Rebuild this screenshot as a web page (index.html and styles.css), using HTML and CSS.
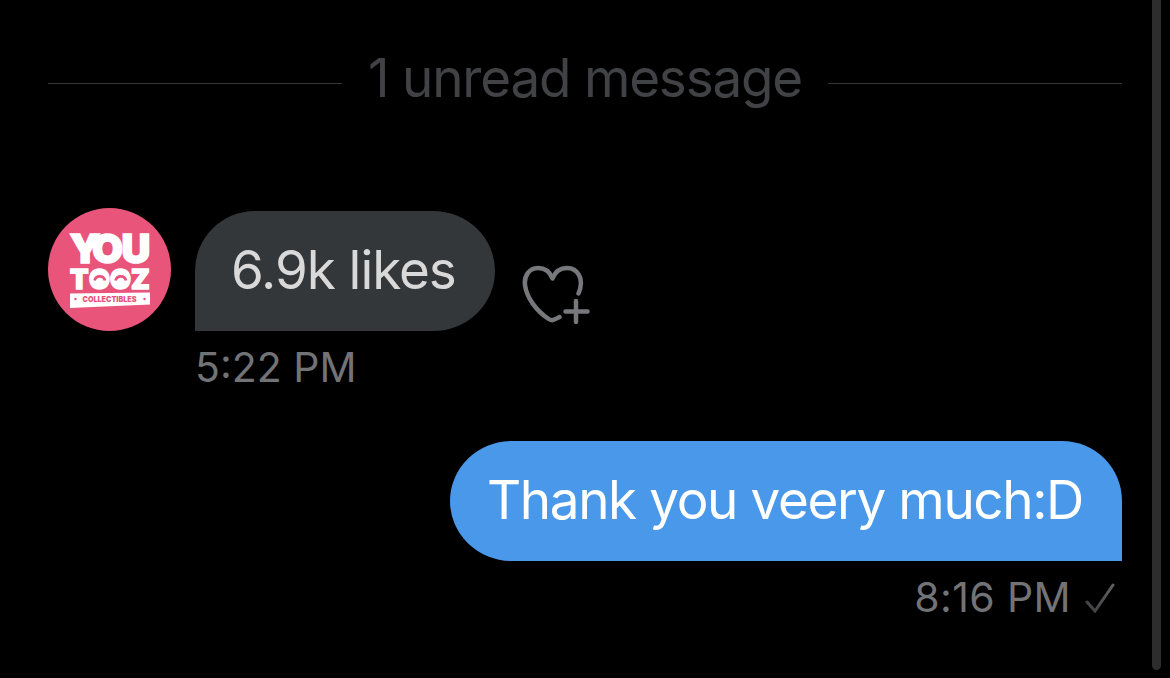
FILE: index.html
```html
<!DOCTYPE html>
<html lang="en">
  <head>
    <meta charset="UTF-8" />
    <meta name="viewport" content="width=device-width, initial-scale=1.0" />
    <title>Messages</title>
    <link rel="stylesheet" href="styles.css">
  </head>
  <body>
    <main class="chat">
      <div class="divider">
        <span class="divider-text">1 unread message</span>
      </div>

      <div class="message received">
        <svg class="avatar" viewBox="0 0 123 123">
          <circle cx="61.5" cy="61.5" r="61.5" fill="#e9547b" />
          <g class="logo">
            <text class="logo-you" x="21.500 44 73.500" y="54.500">YOU</text>
            <text class="logo-tooz" x="22 41 62 83" y="81">TOOZ</text>
          </g>
          <g fill="#fff">
            <ellipse cx="52" cy="71" rx="9" ry="10" />
            <ellipse cx="73" cy="71" rx="9" ry="10" />
            <path d="M22 85.500L102 84.500V96.500L22 100z" />
          </g>
          <g fill="none" stroke="#e9547b" stroke-width="2.800">
            <path d="M46.500 72.500c1.500-5.500 9-5.500 10.500 0M67.500 72.500c1.500-5.500 9-5.500 10.500 0" />
          </g>
          <g fill="#e9547b">
            <circle cx="27.500" cy="91" r="1.200" />
            <circle cx="96.500" cy="91" r="1.200" />
            <text class="logo-small" x="34.500" y="94" textLength="54" lengthAdjust="spacingAndGlyphs">COLLECTIBLES</text>
          </g>
        </svg>
        <div class="bubble">6.9k likes</div>
        <svg class="react" viewBox="0 0 70 64">
          <path d="M56.500 29.500C63 14 55 4 45 4C38 4 33 8 30.500 14.500C28 8 23 4 16 4C7 4 2 12 3 21C4.500 34 15 47 26 54.500C30 57.500 32 56 37.500 53" />
          <path d="M54 37v21M43.500 47.500h22" />
        </svg>
      </div>
      <div class="time">5:22 PM</div>

      <div class="message sent">
        <div class="bubble">Thank you veery much:D</div>
      </div>
      <div class="time sent">
        <span>8:16 PM</span>
        <svg class="check" viewBox="0 0 30 30">
          <defs>
            <linearGradient id="fade" x1="0" y1="1" x2="1" y2="0">
              <stop offset="0" stop-color="#404044" />
              <stop offset="1" stop-color="#606064" />
            </linearGradient>
          </defs>
          <path d="M2 19L10 28L28 2" stroke="url(#fade)" />
        </svg>
      </div>
    </main>
    <div class="scrollbar"></div>
  </body>
</html>
```

FILE: styles.css
```css
body {
  margin: 0;
  background: #000;
  font-family: Inter, "Liberation Sans", sans-serif;
  height: 678px;
  overflow: hidden;
}
.chat {
  padding: 46px 48px 0;
}
.divider {
  display: flex;
  align-items: center;
  gap: 26px;
  height: 74px;
  margin-bottom: 88px;
}
.divider::before,
.divider::after {
  content: "";
  flex: 1;
  height: 1px;
  background: #343536;
}
.divider-text {
  padding-bottom: 10px;
  color: #414245;
  font-size: 53px;
  line-height: 64px;
  letter-spacing: -1.2px;
  white-space: nowrap;
}
.message {
  display: flex;
  align-items: flex-end;
}
.avatar {
  width: 123px;
  height: 123px;
  margin-right: 24px;
}
.bubble {
  box-sizing: border-box;
  width: 300px;
  height: 120px;
  padding-left: 36px;
  border-radius: 60px 62px 62px 0 / 60px 60px 60px 0;
  background: #343739;
  color: #d9d9d9;
  font-size: 53px;
  line-height: 118px;
  letter-spacing: -1.05px;
  white-space: nowrap;
}
.react {
  width: 70px;
  height: 64px;
  margin: 0 0 3px 27px;
  fill: none;
  stroke: #77787b;
  stroke-width: 4.500;
  stroke-linecap: round;
  stroke-linejoin: round;
}
.time {
  height: 50px;
  margin: 11px 0 49px 147px;
  color: #727377;
  font-size: 41px;
  line-height: 50px;
}
.sent {
  justify-content: flex-end;
}
.sent .bubble {
  width: 672px;
  padding-left: 37px;
  border-radius: 62px 60px 0 62px / 60px 60px 0 60px;
  background: #4a98e9;
  color: #fff;
  letter-spacing: -1.38px;
}
.time.sent {
  display: flex;
  align-items: center;
  gap: 14px;
  margin: 11px 7px 0 0;
  letter-spacing: 0.4px;
}
.check {
  width: 30px;
  height: 30px;
  margin-top: 2px;
  fill: none;
  stroke-width: 3;
  stroke-linecap: round;
}
.logo {
  fill: #fff;
  stroke: #fff;
  stroke-width: 1.500;
  font-weight: 900;
}
.logo-you {
  font-size: 40px;
}
.logo-tooz {
  font-size: 27px;
}
.logo-small {
  font-size: 8px;
  font-weight: 900;
}
.scrollbar {
  position: absolute;
  top: -10px;
  left: 1152px;
  width: 9px;
  height: 680px;
  border-radius: 5px;
  background: #2d2d2d;
}
```
